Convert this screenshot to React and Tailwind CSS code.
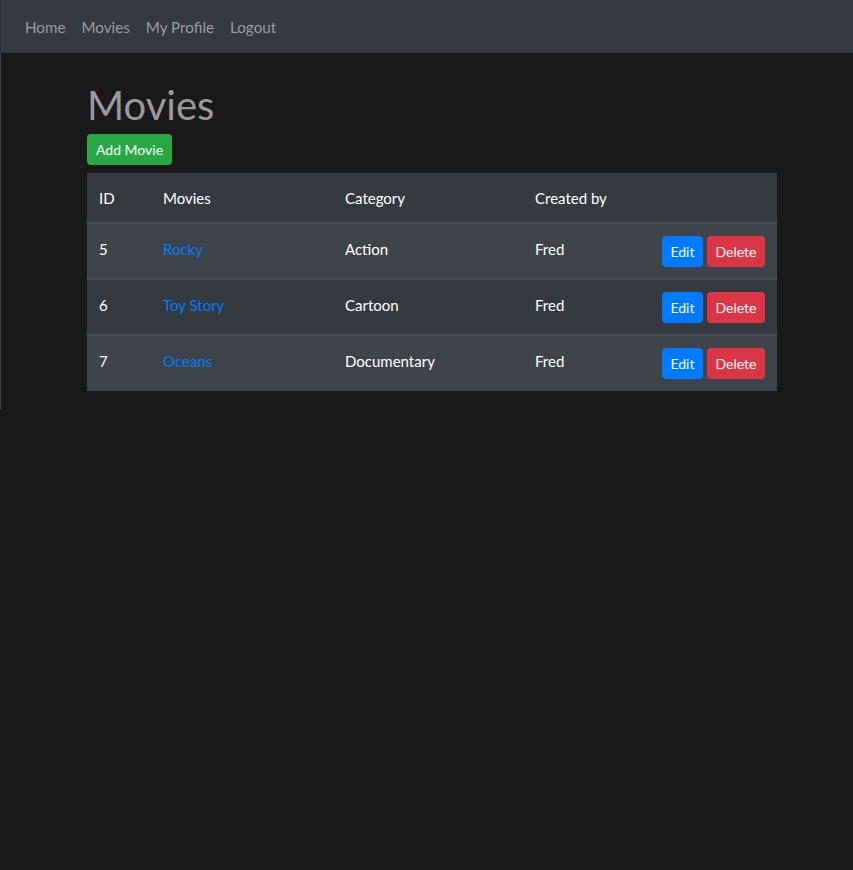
import React from "react";

const rows = [
  { id: 5, name: "Rocky", cat: "Action", by: "Fred" },
  { id: 6, name: "Toy Story", cat: "Cartoon", by: "Fred" },
  { id: 7, name: "Oceans", cat: "Documentary", by: "Fred" },
];

export default function App() {
  return (
    <div className="min-h-[870px] bg-[#191919] text-white" style={{ fontFamily: "Lato, 'Open Sans', sans-serif" }}>
      <nav className="h-[53px] bg-[#343a40] flex items-center px-4 border-l border-[#2a2e33]">
        {["Home", "Movies", "My Profile", "Logout"].map((t) => (
          <a key={t} className="px-2 text-[15.2px] leading-6 text-[#9a9da0]">{t}</a>
        ))}
      </nav>
      <div className="border-l border-[#3a3f45] h-[357px]">
        <div className="w-[690px] ml-[86px]">
          <h1 className="text-[40px] leading-[48px] text-[#9a9a9a] pt-[28px] pb-[5px]">Movies</h1>
          <button className="h-[31px] px-[9px] rounded-[4px] bg-[#28a745] text-[14px] text-white">Add Movie</button>
          <table className="mt-[8px] w-[690px] text-[15px] table-fixed border-collapse">
            <thead>
              <tr className="h-[50px] bg-[#343a40]">
                <th className="w-[64px] text-left font-normal pl-3 pt-[2px]">ID</th>
                <th className="w-[182px] text-left font-normal pl-3 pt-[2px]">Movies</th>
                <th className="w-[190px] text-left font-normal pl-3 pt-[2px]">Category</th>
                <th className="w-[130px] text-left font-normal pl-3 pt-[2px]">Created by</th>
                <th className="font-normal"></th>
              </tr>
            </thead>
            <tbody>
              {rows.map((r, i) => (
                <tr key={r.id} className={(i % 2 === 0 ? "bg-[#3f444b]" : "bg-[#343a40]") + " h-[56px] border-t-2 border-[#454d55] align-top"}>
                  <td className="pl-3 pt-[14px]">{r.id}</td>
                  <td className="pl-3 pt-[14px] text-[#007bff]">{r.name}</td>
                  <td className="pl-3 pt-[14px]">{r.cat}</td>
                  <td className="pl-3 pt-[14px]">{r.by}</td>
                  <td className="pr-3 pt-[12px]">
                    <div className="flex justify-end gap-1">
                      <button className="h-[31px] w-[41px] rounded-[4px] bg-[#007bff] text-[14px] text-white">Edit</button>
                      <button className="h-[31px] w-[58px] rounded-[4px] bg-[#dc3545] text-[14px] text-white">Delete</button>
                    </div>
                  </td>
                </tr>
              ))}
            </tbody>
          </table>
        </div>
      </div>
    </div>
  );
}
